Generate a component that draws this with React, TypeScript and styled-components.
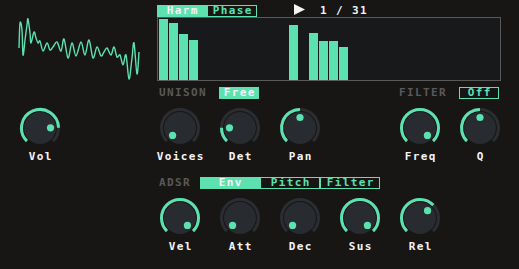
import React from "react";
import styled, { createGlobalStyle } from "styled-components";

const GREEN = "#5de1b1";
const BG = "#171615";
const GREY = "#595959";
const WHITE = "#f4f4f4";
const FONT = `"DejaVu Sans Mono", "Liberation Mono", monospace`;
const FS = "11px";
const LS = "1.4px";

const Global = createGlobalStyle`
  html, body { margin: 0; padding: 0; background: ${BG}; }
  body { width: 519px; height: 269px; overflow: hidden; font-family: ${FONT}; }
`;

const Page = styled.div`
  display: flex;
  width: 519px;
  height: 269px;
  background: ${BG};
`;

const LeftCol = styled.div`
  width: 150px;
  display: flex;
  flex-direction: column;
`;

const WaveArea = styled.div`
  height: 106px;
  box-sizing: border-box;
  padding: 16px 0 0 17px;
`;

const VolSlot = styled.div`
  padding-left: 10px;
`;

const RightCol = styled.div`
  width: 360px;
  padding-top: 5px;
  display: flex;
  flex-direction: column;
`;

const TopRow = styled.div`
  display: flex;
  align-items: center;
  height: 12px;
  padding-left: 7px;
`;

const Tab = styled.div<{ $active?: boolean; $w: number }>`
  width: ${(p) => p.$w}px;
  height: 12px;
  box-sizing: border-box;
  display: flex;
  align-items: center;
  justify-content: center;
  font-family: ${FONT};
  font-weight: bold;
  font-size: ${FS};
  letter-spacing: ${LS};
  padding-left: ${LS};
  line-height: 12px;
  background: ${(p) => (p.$active ? GREEN : BG)};
  color: ${(p) => (p.$active ? WHITE : GREEN)};
  border: ${(p) => (p.$active ? "none" : `1px solid ${GREEN}`)};
`;

const TabGroup = styled.div`
  display: flex;
`;

const PlayIcon = styled.svg`
  margin-left: 37px;
  margin-top: -2px;
`;

const PageText = styled.div`
  margin-left: 14px;
  color: ${WHITE};
  font-weight: bold;
  font-size: ${FS};
  letter-spacing: ${LS};
  line-height: 12px;
  white-space: pre;
  margin-top: -1px;
`;

const HarmBox = styled.div`
  margin-left: 7px;
  width: 344px;
  height: 64px;
  box-sizing: border-box;
  border: 1px solid ${GREY};
  background: #18191b;
  display: flex;
  align-items: flex-end;
  gap: 1px;
  padding: 0 1px;
`;

const Bar = styled.div`
  width: 9px;
  flex: none;
  background: ${GREEN};
`;

const Grid = styled.div<{ $mt: number }>`
  display: grid;
  grid-template-columns: repeat(6, 60px);
  margin-top: ${(p) => p.$mt}px;
`;

const HeadGrid = styled(Grid)`
  height: 12px;
  align-items: center;
`;

const SectionLabel = styled.div<{ $col?: number }>`
  padding-left: 9px;
  color: ${GREY};
  font-weight: bold;
  font-size: ${FS};
  letter-spacing: ${LS};
  line-height: 12px;
  ${(p) => (p.$col ? `grid-column: ${p.$col};` : "")}
`;

const Badge = styled(Tab)`
  margin-left: 9px;
`;

const AdsrRow = styled.div`
  display: flex;
  align-items: center;
  height: 12px;
  margin-top: 14px;
  gap: 9px;
`;

const Cell = styled.div<{ $col?: number }>`
  width: 60px;
  display: flex;
  flex-direction: column;
  align-items: center;
  ${(p) => (p.$col ? `grid-column: ${p.$col};` : "")}
`;

const KnobLabel = styled.div`
  height: 12px;
  line-height: 12px;
  margin-top: 1px;
  color: ${WHITE};
  font-weight: bold;
  font-size: ${FS};
  letter-spacing: ${LS};
  padding-left: ${LS};
`;

function polar(cx: number, cy: number, r: number, deg: number) {
  const a = ((deg - 90) * Math.PI) / 180;
  return [cx + r * Math.cos(a), cy + r * Math.sin(a)];
}

function arcPath(cx: number, cy: number, r: number, a0: number, a1: number) {
  const [x0, y0] = polar(cx, cy, r, a0);
  const [x1, y1] = polar(cx, cy, r, a1);
  const large = a1 - a0 > 180 ? 1 : 0;
  return `M ${x0} ${y0} A ${r} ${r} 0 ${large} 1 ${x1} ${y1}`;
}

const Knob: React.FC<{ value: number; label: string; col?: number }> = ({ value, label, col }) => {
  const c = 22;
  const start = -135;
  const end = start + 270 * value;
  const [dx, dy] = polar(c, c, 10.5, end);
  return (
    <Cell $col={col}>
      <svg width={44} height={44} viewBox="0 0 44 44">
        <path d={arcPath(c, c, 18.5, -135, 135)} stroke="#2a2d31" strokeWidth={3} fill="none" />
        {value > 0.01 && <path d={arcPath(c, c, 18.5, start, end)} stroke={GREEN} strokeWidth={3} fill="none" />}
        <circle cx={c} cy={c} r={16} fill="#282c30" />
        <circle cx={dx} cy={dy} r={3.6} fill={GREEN} />
      </svg>
      <KnobLabel>{label}</KnobLabel>
    </Cell>
  );
};

const wavePts: [number, number][] = [
  [19, 48], [20, 23], [22, 30], [23, 55], [25, 40], [27, 25], [28, 19], [30, 33], [31, 43],
  [34, 32], [36, 38], [38, 43], [40, 41], [43, 51], [47, 43], [50, 50], [53, 47], [57, 42],
  [61, 51], [64, 39], [68, 58], [72, 43], [76, 56], [81, 42], [85, 55], [89, 40], [93, 58],
  [97, 47], [101, 56], [104, 52], [107, 48], [111, 55], [114, 47], [117, 57], [120, 55],
  [123, 65], [126, 55], [129, 79], [132, 58], [134, 43], [137, 74], [139, 52],
];

function smoothPath(pts: [number, number][]) {
  let d = `M ${pts[0][0]} ${pts[0][1]}`;
  for (let i = 0; i < pts.length - 1; i++) {
    const p0 = pts[i - 1] || pts[i];
    const p1 = pts[i];
    const p2 = pts[i + 1];
    const p3 = pts[i + 2] || p2;
    const c1x = p1[0] + (p2[0] - p0[0]) / 6;
    const c1y = p1[1] + (p2[1] - p0[1]) / 6;
    const c2x = p2[0] - (p3[0] - p1[0]) / 6;
    const c2y = p2[1] - (p3[1] - p1[1]) / 6;
    d += ` C ${c1x} ${c1y} ${c2x} ${c2y} ${p2[0]} ${p2[1]}`;
  }
  return d;
}

const Wave: React.FC = () => (
  <svg width={124} height={66} viewBox="17 16 124 66">
    <path d={smoothPath(wavePts)} fill="none" stroke={GREEN} strokeWidth={1.4} />
  </svg>
);

const harmonics = [61, 57, 46, 40, 0, 0, 0, 0, 0, 0, 0, 0, 0, 55, 0, 47, 39, 39, 33];

export default function App() {
  return (
    <>
      <Global />
      <Page>
        <LeftCol>
          <WaveArea>
            <Wave />
          </WaveArea>
          <VolSlot>
            <Knob value={0.83} label="Vol" />
          </VolSlot>
        </LeftCol>
        <RightCol>
          <TopRow>
            <TabGroup>
              <Tab $active $w={50}>Harm</Tab>
              <Tab $w={50}>Phase</Tab>
            </TabGroup>
            <PlayIcon width={12} height={12} viewBox="0 0 12 12">
              <polygon points="0,0 11,5.5 0,11" fill={WHITE} />
            </PlayIcon>
            <PageText>1 / 31</PageText>
          </TopRow>
          <HarmBox>
            {harmonics.map((h, i) => (
              <Bar key={i} style={{ height: h }} />
            ))}
          </HarmBox>
          <HeadGrid $mt={6}>
            <SectionLabel>UNISON</SectionLabel>
            <Badge $active $w={40}>Free</Badge>
            <SectionLabel $col={5}>FILTER</SectionLabel>
            <Badge $w={40}>Off</Badge>
          </HeadGrid>
          <Grid $mt={7}>
            <Knob value={0} label="Voices" />
            <Knob value={0.17} label="Det" />
            <Knob value={0.5} label="Pan" />
            <Knob value={1} label="Freq" col={5} />
            <Knob value={0.5} label="Q" />
          </Grid>
          <AdsrRow>
            <SectionLabel>ADSR</SectionLabel>
            <TabGroup>
              <Tab $active $w={60}>Env</Tab>
              <Tab $w={60}>Pitch</Tab>
              <Tab $w={60}>Filter</Tab>
            </TabGroup>
          </AdsrRow>
          <Grid $mt={7}>
            <Knob value={1} label="Vel" />
            <Knob value={0} label="Att" />
            <Knob value={0} label="Dec" />
            <Knob value={1} label="Sus" />
            <Knob value={0.67} label="Rel" />
          </Grid>
        </RightCol>
      </Page>
    </>
  );
}
